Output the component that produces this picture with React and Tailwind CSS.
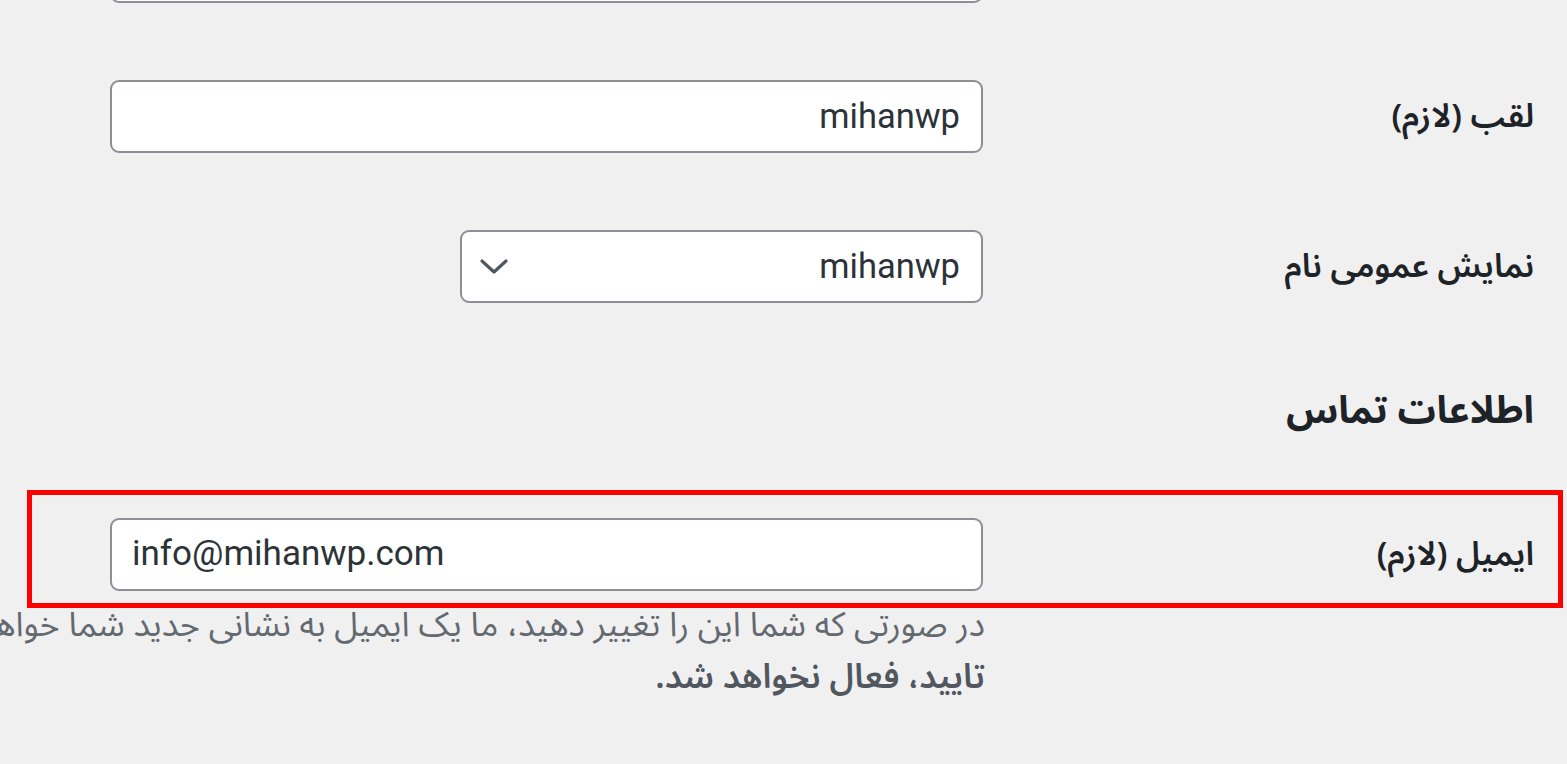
import React from "react";

const fa = { fontFamily: '"Noto Sans Arabic", "Vazirmatn", "DejaVu Sans", sans-serif' };
const latin = { fontFamily: 'Roboto, "Noto Sans", sans-serif' };

function Chevron() {
  return (
    <svg width="28" height="16" viewBox="0 0 28 16" fill="none">
      <polyline points="2,2 14,13 26,2" stroke="#50575e" strokeWidth="3.2" strokeLinecap="round" strokeLinejoin="round" />
    </svg>
  );
}

export default function App() {
  return (
    <div dir="rtl" className="w-[1567px] h-[764px] bg-[#f0f0f1] overflow-hidden flex flex-col">
      {/* partially visible field at top */}
      <div className="flex mt-[-70px] shrink-0">
        <div className="w-[584px] shrink-0" />
        <div className="w-[873px] h-[73px] bg-white border-2 border-[#8c8f94] rounded-[9px]" />
      </div>

      {/* nickname */}
      <div className="flex items-center mt-[77px] shrink-0">
        <div className="w-[584px] shrink-0 pr-[33px] text-[33px] font-semibold text-[#1d2327]" style={fa}>
          لقب (لازم)
        </div>
        <div className="w-[873px] h-[73px] bg-white border-2 border-[#8c8f94] rounded-[9px] flex items-center pr-[21px] text-[34.5px] text-[#2c3338]" style={latin}>
          mihanwp
        </div>
      </div>

      {/* display name */}
      <div className="flex items-center mt-[77px] shrink-0">
        <div className="w-[584px] shrink-0 pr-[33px] text-[33px] font-semibold text-[#1d2327]" style={fa}>
          نمایش عمومی نام
        </div>
        <div className="w-[523px] h-[73px] bg-white border-2 border-[#8c8f94] rounded-[9px] flex items-center justify-between pr-[21px] pl-[18px] text-[34.5px] text-[#2c3338]" style={latin}>
          <span>mihanwp</span>
          <Chevron />
        </div>
      </div>

      {/* heading */}
      <div className="mt-[80px] pr-[33px] h-[56px] flex items-center text-[38px] font-bold text-[#1d2327] shrink-0" style={fa}>
        اطلاعات تماس
      </div>

      {/* email highlighted */}
      <div className="mt-[51px] mr-[4px] w-[1536px] border-[5px] border-[#ff0000] pt-[23px] pb-[12px] flex items-center shrink-0">
        <div className="w-[575px] shrink-0 pr-[24px] text-[33px] font-semibold text-[#1d2327]" style={fa}>
          ایمیل (لازم)
        </div>
        <div dir="ltr" className="w-[873px] h-[73px] bg-white border-2 border-[#8c8f94] rounded-[9px] flex items-center pl-[20px] text-[35px] text-[#2c3338]" style={latin}>
          info@mihanwp.com
        </div>
      </div>

      {/* description */}
      <div className="pr-[582px] text-[34px] leading-[52px] text-[#646970] shrink-0 mt-[-9px]" style={fa}>
        <div className="whitespace-nowrap">
          در صورتی که شما این را تغییر دهید، ما یک ایمیل به نشانی جدید شما خواهیم فرستاد تا آن را تایید کنید. <strong className="font-semibold text-[#50575e]">نشانی جدید تا زمان</strong>
        </div>
        <div className="whitespace-nowrap">
          <strong className="font-semibold text-[#50575e]">تایید، فعال نخواهد شد.</strong>
        </div>
      </div>
    </div>
  );
}
